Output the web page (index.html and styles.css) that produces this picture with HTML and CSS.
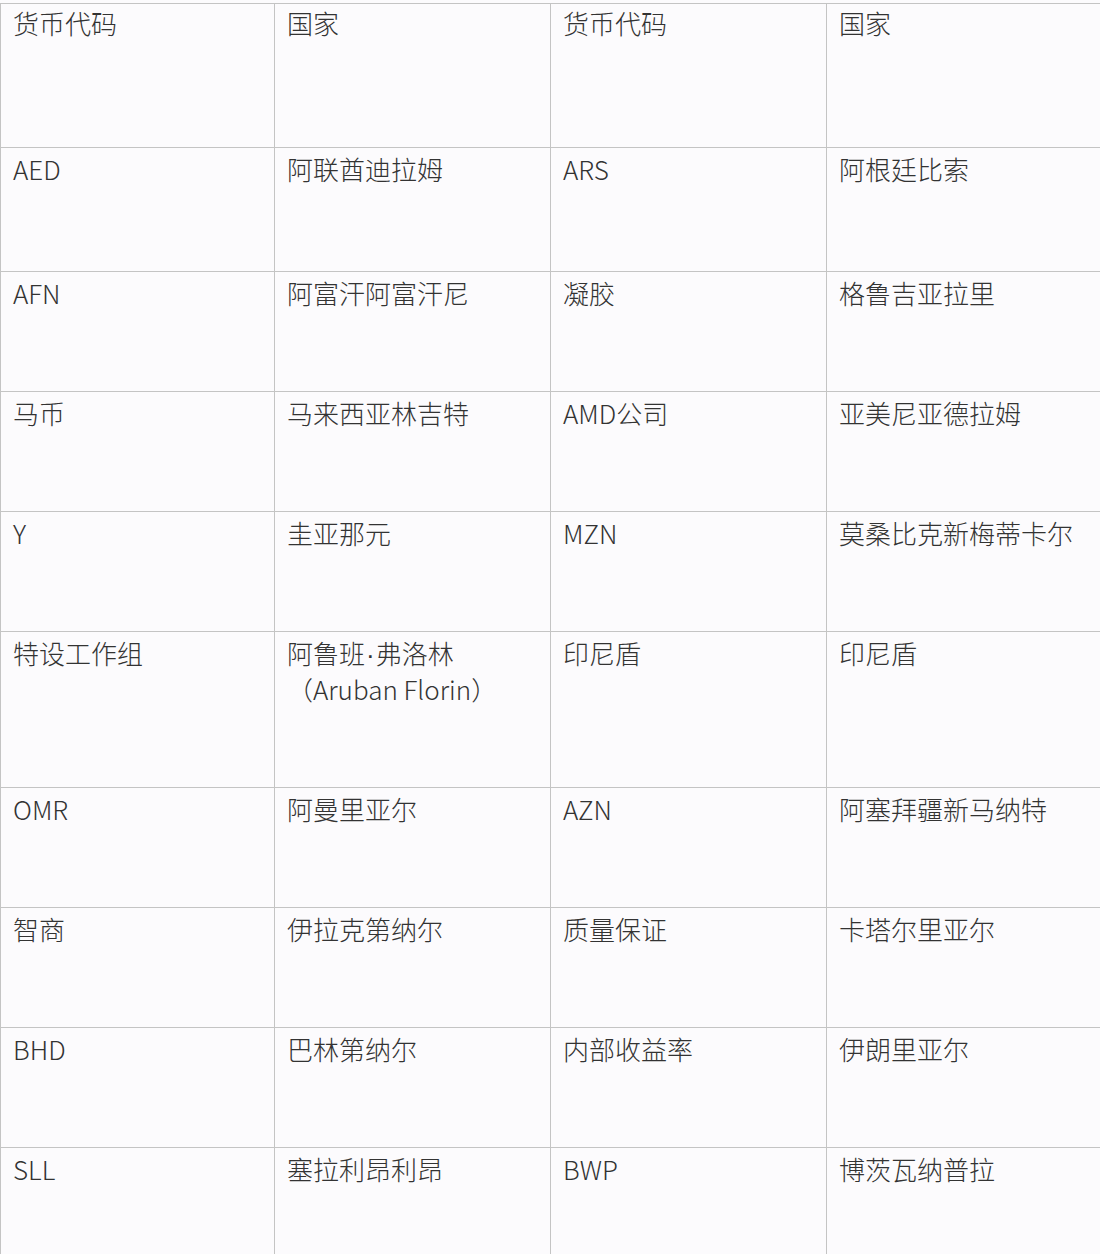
FILE: index.html
```html
<!DOCTYPE html>
<html lang="zh-CN">
<head>
<meta charset="utf-8">
<title>货币代码</title>
<link rel="stylesheet" href="styles.css">
</head>
<body>
<table class="codes">
  <colgroup>
    <col class="c1"><col class="c2"><col class="c3"><col class="c4">
  </colgroup>
  <tbody>
    <tr class="head"><td>货币代码</td><td>国家</td><td>货币代码</td><td>国家</td></tr>
    <tr class="tall"><td>AED</td><td>阿联酋迪拉姆</td><td>ARS</td><td>阿根廷比索</td></tr>
    <tr><td>AFN</td><td>阿富汗阿富汗尼</td><td>凝胶</td><td>格鲁吉亚拉里</td></tr>
    <tr><td>马币</td><td>马来西亚林吉特</td><td>AMD公司</td><td>亚美尼亚德拉姆</td></tr>
    <tr><td>Y</td><td>圭亚那元</td><td>MZN</td><td>莫桑比克新梅蒂卡尔</td></tr>
    <tr><td>特设工作组</td><td>阿鲁班<span class="dot">·</span>弗洛林（Aruban Florin）</td><td>印尼盾</td><td>印尼盾</td></tr>
    <tr><td>OMR</td><td>阿曼里亚尔</td><td>AZN</td><td>阿塞拜疆新马纳特</td></tr>
    <tr><td>智商</td><td>伊拉克第纳尔</td><td>质量保证</td><td>卡塔尔里亚尔</td></tr>
    <tr><td>BHD</td><td>巴林第纳尔</td><td>内部收益率</td><td>伊朗里亚尔</td></tr>
    <tr><td>SLL</td><td>塞拉利昂利昂</td><td>BWP</td><td>博茨瓦纳普拉</td></tr>
  </tbody>
</table>
</body>
</html>
```

FILE: styles.css
```css
html, body {
  margin: 0;
  padding: 0;
  background: #fcfbfd;
  overflow: hidden;
}

body {
  padding-top: 3px;
  font-family: "Noto Sans CJK SC", "Noto Sans", sans-serif;
  font-weight: 300;
  color: #333333;
}

.codes {
  width: 1100px;
  table-layout: fixed;
  border-collapse: collapse;
  border-spacing: 0;
}

.c1 { width: 274px; }
.c2 { width: 276px; }
.c3 { width: 276px; }
.c4 { width: 274px; }

.codes td {
  border: 1px solid #c4c4c4;
  padding: 3px 12px 80px 12px;
  font-size: 26px;
  line-height: 36px;
  vertical-align: top;
  word-break: normal;
}

.codes td:last-child {
  border-right: none;
}

.codes tr.head td {
  padding-top: 1px;
  padding-bottom: 106px;
}

.codes tr.tall td {
  padding-bottom: 84px;
}

.dot {
  font-family: "Liberation Sans", sans-serif;
  line-height: 1;
  margin: 0 1px;
}
```
